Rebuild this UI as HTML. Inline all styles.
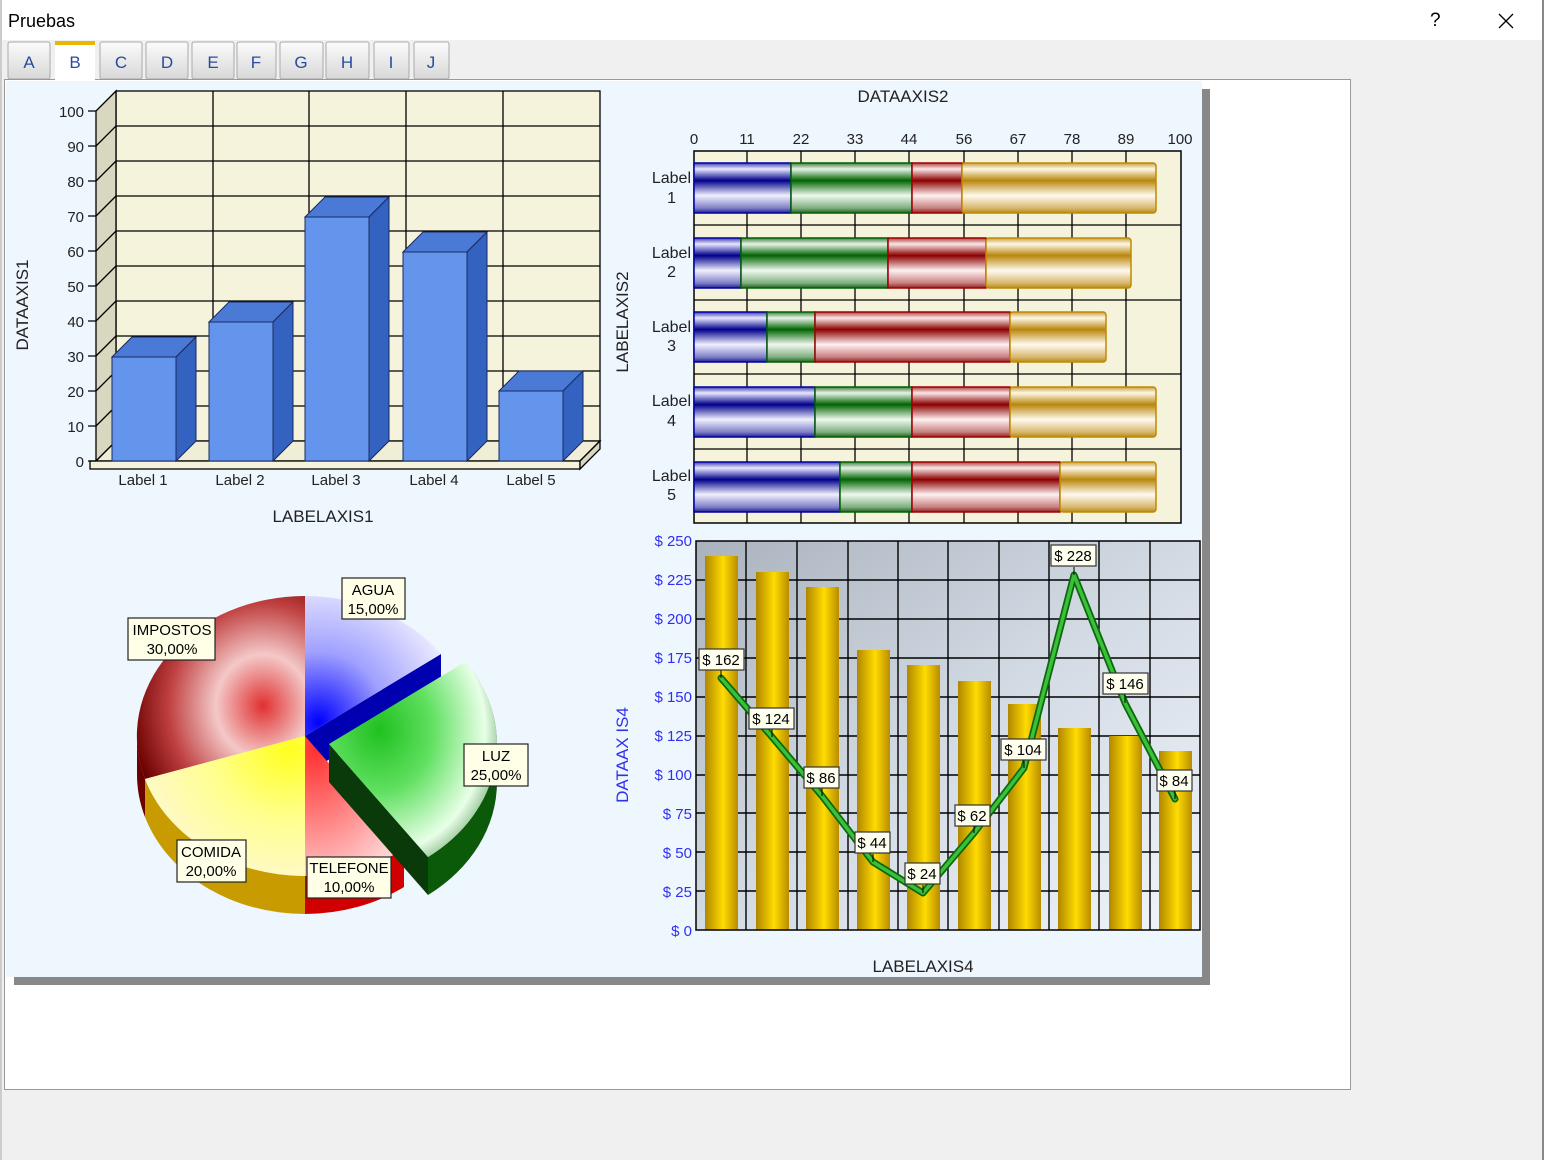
<!DOCTYPE html>
<html><head><meta charset="utf-8"><style>
body{margin:0;width:1544px;height:1160px;background:#f0f0f0;overflow:hidden;font-family:"Liberation Sans",sans-serif;position:relative}
.abs{position:absolute}
</style></head><body>
<div class="abs" style="left:0;top:0;width:1542px;height:40px;background:#fff"></div>
<div class="abs" style="left:1542px;top:0;width:2px;height:1160px;background:#888"></div>
<div class="abs" style="left:0;top:0;width:2px;height:1160px;background:#ccc"></div>
<div class="abs" style="left:8px;top:11px;font-size:18px;color:#000">Pruebas</div>
<div class="abs" style="left:1430px;top:10px;font-size:19px;color:#000">?</div>
<svg class="abs" style="left:1498px;top:13px" width="16" height="16"><path d="M1 1L15 15M15 1L1 15" stroke="#000" stroke-width="1.3"/></svg>
<svg class="abs" style="left:0;top:0" width="1544" height="1160" font-family="Liberation Sans, sans-serif">
<defs>
<linearGradient id="tab" x1="0" y1="0" x2="0" y2="1"><stop offset="0" stop-color="#fbfbfb"/><stop offset="1" stop-color="#d8d8d8"/></linearGradient>
<linearGradient id="gB" x1="0" y1="0" x2="0" y2="1"><stop offset="0" stop-color="#4040b0"/><stop offset=".12" stop-color="#e8e8ff"/><stop offset=".35" stop-color="#00008b"/><stop offset=".65" stop-color="#f0f0ff"/><stop offset=".9" stop-color="#8080c8"/><stop offset="1" stop-color="#202090"/></linearGradient>
<linearGradient id="gG" x1="0" y1="0" x2="0" y2="1"><stop offset="0" stop-color="#408040"/><stop offset=".12" stop-color="#e8f4e8"/><stop offset=".35" stop-color="#006400"/><stop offset=".65" stop-color="#f0f8f0"/><stop offset=".9" stop-color="#80b080"/><stop offset="1" stop-color="#206020"/></linearGradient>
<linearGradient id="gR" x1="0" y1="0" x2="0" y2="1"><stop offset="0" stop-color="#b04040"/><stop offset=".12" stop-color="#fbe8e8"/><stop offset=".35" stop-color="#8b0000"/><stop offset=".65" stop-color="#fff0f0"/><stop offset=".9" stop-color="#c88080"/><stop offset="1" stop-color="#902020"/></linearGradient>
<linearGradient id="gY" x1="0" y1="0" x2="0" y2="1"><stop offset="0" stop-color="#c8a040"/><stop offset=".12" stop-color="#fff8e8"/><stop offset=".35" stop-color="#b8860b"/><stop offset=".65" stop-color="#fffaf0"/><stop offset=".9" stop-color="#d8b870"/><stop offset="1" stop-color="#b88a10"/></linearGradient>
<linearGradient id="gold" x1="0" y1="0" x2="1" y2="0"><stop offset="0" stop-color="#b08600"/><stop offset=".55" stop-color="#ffdc00"/><stop offset="1" stop-color="#b88c00"/></linearGradient>
<linearGradient id="lbg" x1="0" y1="0" x2="1" y2="1"><stop offset="0" stop-color="#aab2bd"/><stop offset=".5" stop-color="#d2dae4"/><stop offset="1" stop-color="#f0f4fa"/></linearGradient>
<radialGradient id="pImp" cx="0.75" cy="0.6" r="0.8"><stop offset="0" stop-color="#e03030"/><stop offset=".35" stop-color="#f4c8c8"/><stop offset=".7" stop-color="#c04040"/><stop offset="1" stop-color="#6a0000"/></radialGradient>
<radialGradient id="pAg" cx="0.1" cy="0.9" r="1"><stop offset="0" stop-color="#0000ff"/><stop offset=".5" stop-color="#a0a0ff"/><stop offset="1" stop-color="#e8e8ff"/></radialGradient>
<radialGradient id="pLuz" cx="0.3" cy="0.35" r="0.9"><stop offset="0" stop-color="#20c020"/><stop offset=".35" stop-color="#60e060"/><stop offset=".7" stop-color="#e8ffe8"/><stop offset="1" stop-color="#106010"/></radialGradient>
<radialGradient id="pCom" cx="0.9" cy="0.1" r="1"><stop offset="0" stop-color="#ffff20"/><stop offset=".5" stop-color="#ffff90"/><stop offset="1" stop-color="#fff8d0"/></radialGradient>
<radialGradient id="pTel" cx="0.1" cy="0.1" r="1"><stop offset="0" stop-color="#ff3030"/><stop offset=".6" stop-color="#ff9090"/><stop offset="1" stop-color="#ffd0d0"/></radialGradient>
</defs>
<!-- tabs -->
<g font-size="17" fill="#2a4aa0" text-anchor="middle">
<rect x="8" y="42" width="42" height="37" rx="2" fill="url(#tab)" stroke="#aaa"/><text x="29" y="68">A</text>
<rect x="100" y="42" width="42" height="37" rx="2" fill="url(#tab)" stroke="#aaa"/><text x="121" y="68">C</text>
<rect x="146" y="42" width="42" height="37" rx="2" fill="url(#tab)" stroke="#aaa"/><text x="167" y="68">D</text>
<rect x="192" y="42" width="42" height="37" rx="2" fill="url(#tab)" stroke="#aaa"/><text x="213" y="68">E</text>
<rect x="237" y="42" width="39" height="37" rx="2" fill="url(#tab)" stroke="#aaa"/><text x="256" y="68">F</text>
<rect x="280" y="42" width="43" height="37" rx="2" fill="url(#tab)" stroke="#aaa"/><text x="301" y="68">G</text>
<rect x="326" y="42" width="43" height="37" rx="2" fill="url(#tab)" stroke="#aaa"/><text x="347" y="68">H</text>
<rect x="374" y="42" width="35" height="37" rx="2" fill="url(#tab)" stroke="#aaa"/><text x="391" y="68">I</text>
<rect x="414" y="42" width="35" height="37" rx="2" fill="url(#tab)" stroke="#aaa"/><text x="431" y="68">J</text>
</g>
<rect x="4.5" y="79.5" width="1346" height="1010" fill="#fff" stroke="#999"/>
<rect x="55" y="41" width="40" height="40" fill="#fff"/><rect x="55" y="41" width="40" height="4" fill="#e8b800"/>
<text x="75" y="68" font-size="17" fill="#2a4aa0" text-anchor="middle">B</text>
<!-- chart bg -->
<rect x="14" y="89" width="1196" height="896" fill="#888"/>
<rect x="6" y="81" width="1196" height="896" fill="#eef6fe"/>

<!-- BAR 3D -->
<g stroke="#000" stroke-width="1.3">
<rect x="116" y="91" width="484" height="350" fill="#f5f3dc"/>
<path d="M96 111L116 91L116 441L96 461Z" fill="#d9d7c0"/>
<path d="M96 461L116 441L600 441L580 461Z" fill="#f0eed6"/>
<rect x="90" y="461" width="490" height="8" fill="#f5f3dc"/>
<path d="M580 461L600 441L600 449L580 469Z" fill="#d9d7c0"/>
<path d="M213 91V441M309 91V441M406 91V441M503 91V441" fill="none"/>
<path d="M116 126H600M116 161H600M116 196H600M116 231H600M116 266H600M116 301H600M116 336H600M116 371H600M116 406H600" fill="none"/>
<path d="M96 146L116 126M96 181L116 161M96 216L116 196M96 251L116 231M96 286L116 266M96 321L116 301M96 356L116 336M96 391L116 371M96 426L116 406" fill="none"/>
<path d="M88 111H96M88 146H96M88 181H96M88 216H96M88 251H96M88 286H96M88 321H96M88 356H96M88 391H96M88 426H96M88 461H96"/>
</g>
<g stroke="#1a2a60" stroke-width="1">
<path d="M112 357L132 337L196 337L176 357Z" fill="#4a7ad6"/><path d="M176 357L196 337L196 441L176 461Z" fill="#3462c0"/><rect x="112" y="357" width="64" height="104" fill="#6495ed"/>
<path d="M209 322L229 302L293 302L273 322Z" fill="#4a7ad6"/><path d="M273 322L293 302L293 441L273 461Z" fill="#3462c0"/><rect x="209" y="322" width="64" height="139" fill="#6495ed"/>
<path d="M305 217L325 197L389 197L369 217Z" fill="#4a7ad6"/><path d="M369 217L389 197L389 441L369 461Z" fill="#3462c0"/><rect x="305" y="217" width="64" height="244" fill="#6495ed"/>
<path d="M403 252L423 232L487 232L467 252Z" fill="#4a7ad6"/><path d="M467 252L487 232L487 441L467 461Z" fill="#3462c0"/><rect x="403" y="252" width="64" height="209" fill="#6495ed"/>
<path d="M499 391L519 371L583 371L563 391Z" fill="#4a7ad6"/><path d="M563 391L583 371L583 441L563 461Z" fill="#3462c0"/><rect x="499" y="391" width="64" height="70" fill="#6495ed"/>
</g>
<g font-size="15" fill="#222" text-anchor="end">
<text x="84" y="117">100</text><text x="84" y="152">90</text><text x="84" y="187">80</text><text x="84" y="222">70</text><text x="84" y="257">60</text><text x="84" y="292">50</text><text x="84" y="327">40</text><text x="84" y="362">30</text><text x="84" y="397">20</text><text x="84" y="432">10</text><text x="84" y="467">0</text>
</g>
<g font-size="15" fill="#222" text-anchor="middle">
<text x="143" y="485">Label 1</text><text x="240" y="485">Label 2</text><text x="336" y="485">Label 3</text><text x="434" y="485">Label 4</text><text x="531" y="485">Label 5</text>
<text x="323" y="522" font-size="17">LABELAXIS1</text>
<text transform="translate(28,305) rotate(-90)" font-size="17">DATAAXIS1</text>
</g>

<!-- STACKED -->
<rect x="694" y="151" width="487" height="372" fill="#f5f3dc" stroke="#000" stroke-width="1.5"/>
<g stroke="#000" stroke-width="1.3" fill="none">
<path d="M747 151V523M801 151V523M855 151V523M909 151V523M964 151V523M1018 151V523M1072 151V523M1126 151V523"/>
<path d="M694 225H1181M694 300H1181M694 374H1181M694 449H1181"/>
</g>
<g stroke-width="1.5">
<rect x="694" y="163" width="97" height="50" fill="url(#gB)" stroke="#0000a0"/><rect x="791" y="163" width="121" height="50" fill="url(#gG)" stroke="#006000"/><rect x="912" y="163" width="50" height="50" fill="url(#gR)" stroke="#a00000"/><rect x="962" y="163" width="194" height="50" rx="3" fill="url(#gY)" stroke="#c08a00"/>
<rect x="694" y="238" width="47" height="50" fill="url(#gB)" stroke="#0000a0"/><rect x="741" y="238" width="147" height="50" fill="url(#gG)" stroke="#006000"/><rect x="888" y="238" width="98" height="50" fill="url(#gR)" stroke="#a00000"/><rect x="986" y="238" width="145" height="50" rx="3" fill="url(#gY)" stroke="#c08a00"/>
<rect x="694" y="312" width="73" height="50" fill="url(#gB)" stroke="#0000a0"/><rect x="767" y="312" width="48" height="50" fill="url(#gG)" stroke="#006000"/><rect x="815" y="312" width="195" height="50" fill="url(#gR)" stroke="#a00000"/><rect x="1010" y="312" width="96" height="50" rx="3" fill="url(#gY)" stroke="#c08a00"/>
<rect x="694" y="387" width="121" height="50" fill="url(#gB)" stroke="#0000a0"/><rect x="815" y="387" width="97" height="50" fill="url(#gG)" stroke="#006000"/><rect x="912" y="387" width="98" height="50" fill="url(#gR)" stroke="#a00000"/><rect x="1010" y="387" width="146" height="50" rx="3" fill="url(#gY)" stroke="#c08a00"/>
<rect x="694" y="462" width="146" height="50" fill="url(#gB)" stroke="#0000a0"/><rect x="840" y="462" width="72" height="50" fill="url(#gG)" stroke="#006000"/><rect x="912" y="462" width="148" height="50" fill="url(#gR)" stroke="#a00000"/><rect x="1060" y="462" width="96" height="50" rx="3" fill="url(#gY)" stroke="#c08a00"/>
</g>
<g font-size="15" fill="#222" text-anchor="middle">
<text x="694" y="144">0</text><text x="747" y="144">11</text><text x="801" y="144">22</text><text x="855" y="144">33</text><text x="909" y="144">44</text><text x="964" y="144">56</text><text x="1018" y="144">67</text><text x="1072" y="144">78</text><text x="1126" y="144">89</text><text x="1180" y="144">100</text>
<text x="903" y="102" font-size="17">DATAAXIS2</text>
<text transform="translate(628,322) rotate(-90)" font-size="17">LABELAXIS2</text>
</g>
<g font-size="16" fill="#222" text-anchor="end">
<text x="691" y="183">Label</text><text x="676" y="203">1</text>
<text x="691" y="258">Label</text><text x="676" y="277">2</text>
<text x="691" y="332">Label</text><text x="676" y="351">3</text>
<text x="691" y="406">Label</text><text x="676" y="426">4</text>
<text x="691" y="481">Label</text><text x="676" y="500">5</text>
</g>

<!-- LINE/BAR -->
<rect x="696" y="541" width="504" height="389" fill="url(#lbg)"/>
<g stroke="#000" stroke-width="1.4" fill="none">
<path d="M746 541V930M797 541V930M848 541V930M898 541V930M948 541V930M999 541V930M1049 541V930M1099 541V930M1150 541V930"/>
<path d="M696 580H1200M696 619H1200M696 658H1200M696 697H1200M696 736H1200M696 775H1200M696 813H1200M696 852H1200M696 891H1200"/>
</g>
<g fill="url(#gold)">
<rect x="705" y="556" width="33" height="374"/><rect x="756" y="572" width="33" height="358"/><rect x="806" y="587" width="33" height="343"/><rect x="857" y="650" width="33" height="280"/><rect x="907" y="665" width="33" height="265"/><rect x="958" y="681" width="33" height="249"/><rect x="1008" y="704" width="33" height="226"/><rect x="1058" y="728" width="33" height="202"/><rect x="1109" y="736" width="33" height="194"/><rect x="1159" y="751" width="33" height="179"/>
</g>
<rect x="696" y="541" width="504" height="389" fill="none" stroke="#000" stroke-width="1.5"/>
<path d="M721 678L772 737L822 796L873 862L923 893L974 833L1024 768L1074 575L1125 703L1175 799" fill="none" stroke="#0a6a0a" stroke-width="7" stroke-linejoin="round" stroke-linecap="round"/>
<path d="M721 678L772 737L822 796L873 862L923 893L974 833L1024 768L1074 575L1125 703L1175 799" fill="none" stroke="#3cc03c" stroke-width="3.5" stroke-linejoin="round" stroke-linecap="round"/>
<g font-size="15" fill="#000" text-anchor="middle">
<g stroke="#000"><path d="M721 670V678M772 729V737M822 788V796M873 854V862M923 885V893M974 825V833M1024 760V768M1074 567V575M1125 695V703M1175 791V799"/></g>
<g fill="#fffff0" stroke="#333" stroke-width="1.2">
<rect x="699" y="649" width="45" height="21"/><rect x="749" y="708" width="45" height="21"/><rect x="804" y="767" width="35" height="21"/><rect x="855" y="832" width="35" height="21"/><rect x="905" y="863" width="35" height="21"/><rect x="955" y="805" width="35" height="21"/><rect x="1001" y="739" width="45" height="21"/><rect x="1051" y="545" width="45" height="21"/><rect x="1103" y="673" width="45" height="21"/><rect x="1157" y="770" width="35" height="21"/>
</g>
<text x="721" y="665">$ 162</text><text x="771" y="724">$ 124</text><text x="821" y="783">$ 86</text><text x="872" y="848">$ 44</text><text x="922" y="879">$ 24</text><text x="972" y="821">$ 62</text><text x="1023" y="755">$ 104</text><text x="1073" y="561">$ 228</text><text x="1125" y="689">$ 146</text><text x="1174" y="786">$ 84</text>
</g>
<g font-size="15" fill="#3030f0" text-anchor="end">
<text x="692" y="546">$ 250</text><text x="692" y="585">$ 225</text><text x="692" y="624">$ 200</text><text x="692" y="663">$ 175</text><text x="692" y="702">$ 150</text><text x="692" y="741">$ 125</text><text x="692" y="780">$ 100</text><text x="692" y="819">$ 75</text><text x="692" y="858">$ 50</text><text x="692" y="897">$ 25</text><text x="692" y="936">$ 0</text>
<text transform="translate(628,755) rotate(-90)" font-size="17" text-anchor="middle">DATAAX IS4</text>
</g>
<text x="923" y="972" font-size="17" fill="#222" text-anchor="middle">LABELAXIS4</text>

<!-- PIE -->
<path d="M305 876A168 140 0 0 1 145 779L145 817A168 140 0 0 0 305 914Z" fill="#c89c00"/>
<path d="M145 779A168 140 0 0 1 137 736L137 774A168 140 0 0 0 145 817Z" fill="#6a0000"/>
<path d="M404 849A168 140 0 0 1 305 876L305 914A168 140 0 0 0 404 887Z" fill="#d00000"/>
<path d="M305 736L441 654L441 692L305 774Z" fill="#0000b0"/>
<path d="M305 736L145 779A168 140 0 0 1 305 596Z" fill="url(#pImp)"/>
<path d="M305 736L305 596A168 140 0 0 1 441 654Z" fill="url(#pAg)"/>
<path d="M305 736L404 849A168 140 0 0 1 305 876Z" fill="url(#pTel)"/>
<path d="M305 736L305 876A168 140 0 0 1 145 779Z" fill="url(#pCom)"/>
<path d="M465 662A168 140 0 0 1 428 857L428 895A168 140 0 0 0 497 782L497 744A168 140 0 0 0 465 662Z" fill="#0a5a0a"/>
<path d="M329 744L428 857L428 895L329 782Z" fill="#0a3a0a"/>
<path d="M329 744L465 662A168 140 0 0 1 428 857Z" fill="url(#pLuz)"/>
<g font-size="15" fill="#000" text-anchor="middle">
<g fill="#ffffe8" stroke="#222" stroke-width="1.2">
<rect x="128" y="618" width="87" height="42"/><rect x="342" y="578" width="63" height="41"/><rect x="464" y="744" width="64" height="42"/><rect x="177" y="840" width="69" height="42"/><rect x="307" y="857" width="84" height="41"/>
</g>
<text x="172" y="635">IMPOSTOS</text><text x="172" y="654">30,00%</text>
<text x="373" y="595">AGUA</text><text x="373" y="614">15,00%</text>
<text x="496" y="761">LUZ</text><text x="496" y="780">25,00%</text>
<text x="211" y="857">COMIDA</text><text x="211" y="876">20,00%</text>
<text x="349" y="873">TELEFONE</text><text x="349" y="892">10,00%</text>
</g>
</svg>
</body></html>
